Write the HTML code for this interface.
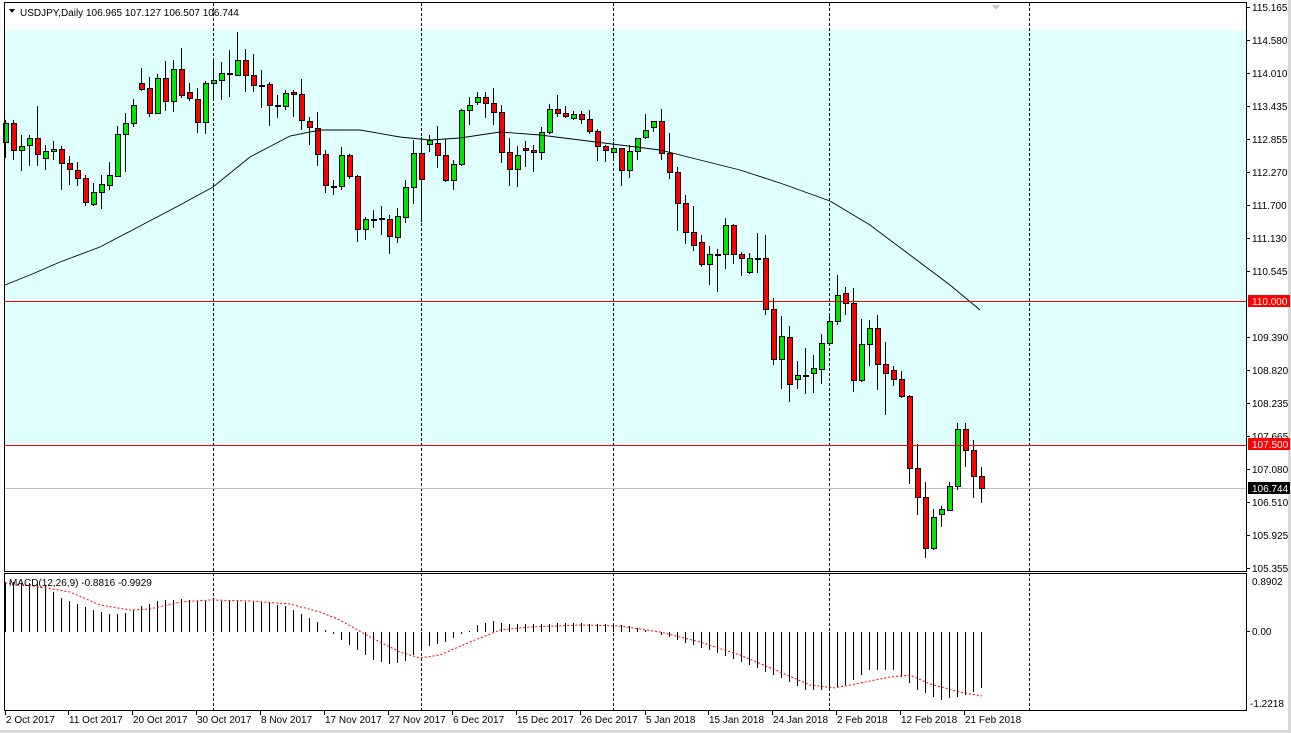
<!DOCTYPE html>
<html><head><meta charset="utf-8"><style>
html,body{margin:0;padding:0;background:#fff;width:1291px;height:733px;overflow:hidden}
svg{display:block}
text{font-family:"Liberation Sans",sans-serif;font-size:10px;fill:#000}
</style></head><body>
<svg id="s" width="1291" height="733" xmlns="http://www.w3.org/2000/svg" shape-rendering="crispEdges">
<rect x="0" y="0" width="1291" height="733" fill="#fff"/>
<rect x="5" y="30" width="1241" height="415" fill="#e0ffff"/>
<rect x="1288" y="0" width="3" height="733" fill="#d8d8d8"/>
<rect x="0" y="730" width="1291" height="3" fill="#d8d8d8"/>
<g id="g"></g>
<rect x="4.5" y="2.5" width="1242" height="569" fill="none" stroke="#000"/>
<rect x="4.5" y="573.5" width="1242" height="137" fill="none" stroke="#000"/>
<polygon points="9,9 15,9 12,13" fill="#000"/>
<text x="20" y="16">USDJPY,Daily  106.965 107.127 106.507 106.744</text>
<text x="9" y="586">MACD(12,26,9) -0.8816 -0.9929</text>
<polygon points="992,5 1000,5 996,10" fill="#c8c8c8"/>
</svg>
<script>
var g=document.getElementById('g'),h='';
function L(x1,y1,x2,y2,c,extra){h+='<line x1="'+x1+'" y1="'+y1+'" x2="'+x2+'" y2="'+y2+'" stroke="'+c+'" '+(extra||'')+'/>';}
function R(x,y,w,hh,c){h+='<rect x="'+x+'" y="'+y+'" width="'+w+'" height="'+hh+'" fill="'+c+'"/>';}
[213,421,613,829,1029].forEach(function(x){L(x+.5,3,x+.5,710,'#000','stroke-dasharray="3,2"');});
R(5,488,1241,1,'#c0c0c0');
var C=[[142,123,120,158],[123,150,120,160],[150,146,135,171],[145,138,135,166],[138,154,106,166],[158,151,145,170],[151,149,141,160],[149,163,146,190],[163,169,156,185],[170,178,162,186],[178,202,175,206],[204,192,183,206],[192,184,175,209],[185,175,162,190],[176,134,126,176],[134,123,113,172],[123,105,99,127],[83,89,68,91],[88,113,77,117],[113,78,74,113],[78,101,61,111],[101,69,60,112],[69,95,48,98],[92,98,83,101],[99,122,88,133],[122,83,81,134],[83,80,60,100],[80,73,62,100],[73,73,50,97],[75,60,32,76],[60,75,49,92],[75,85,54,92],[85,85,70,108],[84,105,82,126],[105,105,95,118],[106,93,90,110],[92,94,90,117],[94,120,79,130],[121,127,117,145],[128,154,112,166],[154,185,150,193],[186,186,180,195],[186,155,147,190],[155,176,154,179],[176,229,175,242],[229,219,217,240],[219,219,210,228],[218,218,206,235],[219,236,215,254],[237,216,208,243],[217,187,180,223],[187,153,140,204],[153,179,137,222],[144,140,135,152],
[143,155,126,168],[155,180,139,182],[180,164,160,190],[164,110,109,166],[110,105,97,125],[102,97,92,105],[97,103,92,118],[103,112,88,125],[112,152,105,163],[152,169,138,186],[169,155,146,187],[148,150,141,167],[150,152,145,172],[152,132,127,160],[132,109,104,134],[109,113,95,117],[113,116,106,118],[118,114,111,120],[114,119,111,124],[119,131,110,134],[131,146,129,161],[146,150,145,162],[152,148,142,158],[148,170,148,186],[170,151,145,178],[151,138,138,160],[137,130,114,139],[127,121,121,132],[121,153,109,160],[153,172,133,179],[172,203,167,231],[203,232,195,244],[232,245,206,251],[242,264,235,267],[264,254,246,285],[254,254,249,292],[254,225,218,269],[225,254,224,264],[254,258,252,276],[272,258,253,274],[258,258,233,273],[258,309,235,315],[309,359,298,365],[359,336,316,389],[337,384,326,402],[379,375,361,389],[375,375,348,394],[373,368,355,393],[369,343,334,384],[343,321,316,344],[321,295,275,325],[293,303,287,315],[303,380,288,392],[380,344,319,382],[344,328,320,366],[328,364,315,390],[364,373,342,415],[370,379,366,386],[379,396,371,398],[396,468,395,484],[468,497,444,515],[497,548,482,558],[548,517,509,550],[514,509,506,527],[510,486,482,511],[486,429,423,490],[429,450,423,467],[450,476,440,498],[476,488,467,503]];
C.forEach(function(d,i){var x=5+8*i,o=d[0],c=d[1],t=Math.min(o,c),b=Math.max(o,c);
 R(x,d[2],1,d[3]-d[2],'#000');
 if(b-t<2){R(x-2,t,6,2,'#000');}
 else {R(x-2,t,6,b-t+1,'#000');R(x-1,t+1,4,b-t-1,c<o?'#00e600':'#ff0000');}
});
var ma=[[5,285],[30,275],[60,262],[100,247],[140,226],[180,205],[213,187],[250,157],[290,136],[320,130],[360,130],[400,137],[430,140],[460,138],[500,132],[540,135],[580,140],[620,145],[660,150],[700,160],[740,170],[780,183],[830,201],[870,225],[910,255],[950,285],[980,310]];
h+='<polyline fill="none" stroke="#000" stroke-width="0.9" shape-rendering="auto" points="'+ma.join(' ')+'"/>';
R(5,301,1241,1,'#ff0000');R(5,445,1241,1,'#ff0000');
var K=[[5,582],[29,583],[45,585],[61,598],[77,604],[93,610],[109,614],[125,613],[141,606],[157,601],[181,599],[197,601],[229,601],[261,602],[285,606],[301,614],[317,622],[325,630],[333,634],[349,645],[373,660],[389,664],[405,661],[421,648],[445,642],[461,634],[469,631],[477,625],[493,621],[509,624],[533,624],[573,623],[605,624],[629,626],[653,632],[677,640],[709,650],[749,665],[781,678],[805,690],[821,690],[845,685],[869,670],[893,670],[917,690],[941,700],[965,695],[981,688]];
function it(x){for(var i=0;i<K.length-1;i++){if(x<=K[i+1][0]){var a=K[i],b=K[i+1];return a[1]+(b[1]-a[1])*(x-a[0])/(b[0]-a[0]);}}return K[K.length-1][1];}
for(var i=0;i<C.length;i++){var x=5+8*i,y=Math.round(it(x));if(Math.abs(y-632)>0)R(x,Math.min(y,632),1,Math.abs(y-632),'#000');}
var S=[[5,583],[40,587],[70,592],[100,605],[130,610],[150,609],[180,602],[210,600],[250,601],[290,604],[320,612],[340,620],[370,637],[400,652],[420,658],[440,655],[470,642],[500,630],[530,627],[580,625],[620,626],[660,632],[700,642],[740,655],[780,672],[810,685],[835,688],[860,683],[890,677],[910,675],[930,684],[960,692],[982,696]];
h+='<polyline fill="none" stroke="#ff0000" stroke-dasharray="2,2" shape-rendering="auto" points="'+S.join(' ')+'"/>';
var P=['115.165','114.580','114.010','113.435','112.855','112.270','111.700','111.130','110.545','','109.390','108.820','108.235','107.665','107.080','106.510','105.925','105.355'];
P.forEach(function(p,i){var y=7+33*i;if(!p)return;R(1246,y,4,1,'#000');h+='<text x="1252" y="'+(y+4)+'">'+p+'</text>';});
h+='<rect x="1248" y="295" width="42" height="12" fill="#ff0000"/><text x="1252" y="305" style="fill:#fff">110.000</text>';
h+='<rect x="1248" y="438" width="42" height="12" fill="#ff0000"/><text x="1252" y="448" style="fill:#fff">107.500</text>';
h+='<rect x="1248" y="482" width="42" height="12" fill="#000"/><text x="1252" y="492" style="fill:#fff">106.744</text>';
h+='<text x="1252" y="585">0.8902</text><text x="1252" y="635">0.00</text><text x="1250" y="707">-1.2218</text>';
R(1246,631,4,1,'#000');
var D=[['2 Oct 2017',5],['11 Oct 2017',68],['20 Oct 2017',132],['30 Oct 2017',196],['8 Nov 2017',260],['17 Nov 2017',324],['27 Nov 2017',388],['6 Dec 2017',452],['15 Dec 2017',516],['26 Dec 2017',580],['5 Jan 2018',645],['15 Jan 2018',708],['24 Jan 2018',772],['2 Feb 2018',836],['12 Feb 2018',900],['21 Feb 2018',964]];
D.forEach(function(d){R(d[1],711,1,4,'#000');h+='<text x="'+(d[1]+1)+'" y="723">'+d[0]+'</text>';});
g.innerHTML=h;
</script>
</body></html>
